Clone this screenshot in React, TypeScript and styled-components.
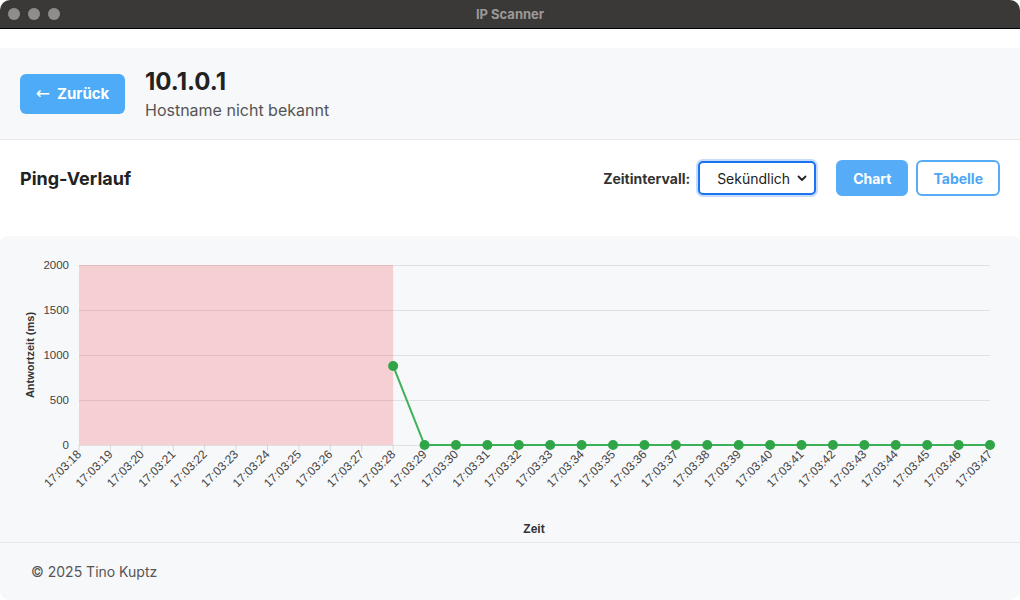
import React from "react";
import styled, { createGlobalStyle } from "styled-components";

const GlobalStyle = createGlobalStyle`
  html, body {
    margin: 0;
    padding: 0;
    background: #ffffff;
  }
  body {
    font-family: Inter, "Noto Sans", "Liberation Sans", sans-serif;
    color: #222;
  }
`;

const times = Array.from({ length: 30 }, (_, i) => `17:03:${String(18 + i).padStart(2, "0")}`);
const values: (number | null)[] = times.map((_, i) => (i < 10 ? null : i === 10 ? 878 : 0));

const PLOT = { left: 79, right: 990, top: 29, bottom: 209 };
const MAX = 2000;

const xAt = (i: number) => PLOT.left + ((PLOT.right - PLOT.left) * i) / (times.length - 1);
const yAt = (v: number) => PLOT.bottom - ((PLOT.bottom - PLOT.top) * v) / MAX;

const PingChart = () => {
  const pts = values
    .map((v, i) => (v === null ? null : [xAt(i), yAt(v)]))
    .filter((p): p is number[] => p !== null);
  return (
    <Styled.ChartSvg width={1020} height={306} viewBox="0 0 1020 306">
      <rect
        x={PLOT.left}
        y={PLOT.top}
        width={xAt(10) - PLOT.left}
        height={PLOT.bottom - PLOT.top}
        fill="#f6cfd3"
      />
      {[0, 500, 1000, 1500, 2000].map((v) => (
        <g key={v}>
          <line
            x1={PLOT.left}
            x2={PLOT.right}
            y1={yAt(v) + 0.5}
            y2={yAt(v) + 0.5}
            stroke="rgba(0,0,0,0.09)"
            strokeWidth={1}
          />
          <text
            x={69}
            y={yAt(v) + 4}
            textAnchor="end"
            fontSize={11.5}
            fill="#444"
            fontFamily="'Liberation Sans', Arial, sans-serif"
          >
            {v}
          </text>
        </g>
      ))}
      {times.map((t, i) => (
        <g key={t}>
          <line
            x1={xAt(i)}
            x2={xAt(i)}
            y1={PLOT.bottom}
            y2={PLOT.bottom + 6}
            stroke="rgba(0,0,0,0.12)"
          />
          <text
            transform={`translate(${xAt(i) + 3} ${PLOT.bottom + 10}) rotate(-45)`}
            textAnchor="end"
            fontSize={12}
            fill="#444"
            fontFamily="'Liberation Sans', Arial, sans-serif"
          >
            {t}
          </text>
        </g>
      ))}
      <polyline
        points={pts.map((p) => p.join(",")).join(" ")}
        fill="none"
        stroke="#3cb15a"
        strokeWidth={2}
      />
      {pts.map(([x, y], i) => (
        <circle key={i} cx={x} cy={y} r={5} fill="#30a548" />
      ))}
      <text
        transform="translate(34 119) rotate(-90)"
        textAnchor="middle"
        fontSize={11}
        fontWeight="bold"
        fill="#333"
        fontFamily="'Liberation Sans', Arial, sans-serif"
      >
        Antwortzeit (ms)
      </text>
      <text
        x={534}
        y={297}
        textAnchor="middle"
        fontSize={12}
        fontWeight="bold"
        fill="#333"
        fontFamily="'Liberation Sans', Arial, sans-serif"
      >
        Zeit
      </text>
    </Styled.ChartSvg>
  );
};

export default function App() {
  return (
    <>
      <GlobalStyle />
      <Styled.Window>
        <Styled.TitleBar>
          <Styled.Lights>
            <Styled.Light />
            <Styled.Light />
            <Styled.Light />
          </Styled.Lights>
          <Styled.WindowTitle>IP Scanner</Styled.WindowTitle>
        </Styled.TitleBar>
        <Styled.Content>
          <Styled.Header>
            <Styled.BackButton>
              <Styled.Arrow>←</Styled.Arrow>Zurück
            </Styled.BackButton>
            <Styled.HostInfo>
              <Styled.HostIp>10.1.0.1</Styled.HostIp>
              <Styled.HostName>Hostname nicht bekannt</Styled.HostName>
            </Styled.HostInfo>
          </Styled.Header>
          <Styled.Section>
            <Styled.SectionTitle>Ping-Verlauf</Styled.SectionTitle>
            <Styled.Controls>
              <Styled.Label htmlFor="interval">Zeitintervall:</Styled.Label>
              <Styled.SelectWrap>
                <Styled.Select id="interval" defaultValue="s">
                  <option value="s">Sekündlich</option>
                  <option value="m">Minütlich</option>
                  <option value="h">Stündlich</option>
                </Styled.Select>
                <Styled.Chevron width="12" height="12" viewBox="0 0 12 12">
                  <path d="M2.5 4.5 L6 8 L9.5 4.5" fill="none" stroke="#222" strokeWidth="1.8" strokeLinecap="round" strokeLinejoin="round" />
                </Styled.Chevron>
              </Styled.SelectWrap>
              <Styled.ViewButtons>
                <Styled.ViewButton $active>Chart</Styled.ViewButton>
                <Styled.ViewButton>Tabelle</Styled.ViewButton>
              </Styled.ViewButtons>
            </Styled.Controls>
          </Styled.Section>
          <Styled.ChartCard>
            <PingChart />
          </Styled.ChartCard>
          <Styled.Footer>© 2025 Tino Kuptz</Styled.Footer>
        </Styled.Content>
      </Styled.Window>
    </>
  );
}

const Styled = {
  Window: styled.div`
    width: 1020px;
    height: 600px;
    display: flex;
    flex-direction: column;
    border-radius: 10px;
    overflow: hidden;
    background: #f7f8fa;
  `,
  TitleBar: styled.div`
    height: 28px;
    flex: none;
    background: #3b3937;
    border-bottom: 1px solid #000;
    display: flex;
    align-items: center;
    justify-content: center;
    position: relative;
  `,
  Lights: styled.div`
    position: absolute;
    left: 8px;
    top: 8px;
    display: flex;
    gap: 8px;
  `,
  Light: styled.span`
    width: 12px;
    height: 12px;
    border-radius: 50%;
    background: #8f8d8b;
  `,
  WindowTitle: styled.div`
    font-family: Inter, "Liberation Sans", sans-serif;
    font-size: 13px;
    font-weight: 700;
    color: #9c9a98;
  `,
  Content: styled.div`
    flex: 1;
    display: flex;
    flex-direction: column;
    background: #ffffff;
    padding-top: 19px;
  `,
  Header: styled.header`
    height: 92px;
    flex: none;
    box-sizing: border-box;
    background: #f7f8fa;
    border-bottom: 1px solid #e6e8eb;
    display: flex;
    align-items: center;
    gap: 20px;
    padding: 0 20px;
  `,
  BackButton: styled.button`
    width: 105px;
    height: 40px;
    border: none;
    border-radius: 6px;
    background: #4dabf7;
    color: #fff;
    font-family: Inter, "Liberation Sans", sans-serif;
    font-size: 15px;
    font-weight: 700;
    cursor: pointer;
    display: flex;
    align-items: center;
    justify-content: center;
    gap: 7px;
    padding: 0;
  `,
  Arrow: styled.span`
    font-family: "DejaVu Sans", sans-serif;
    font-weight: 400;
    font-size: 17px;
    line-height: 1;
    margin-top: -1px;
  `,
  HostInfo: styled.div`
    display: flex;
    flex-direction: column;
    gap: 4px;
  `,
  HostIp: styled.h1`
    margin: 0;
    font-size: 24px;
    line-height: 28px;
    font-weight: 700;
    color: #222;
  `,
  HostName: styled.div`
    font-size: 16px;
    line-height: 20px;
    color: #555;
  `,
  Section: styled.section`
    height: 76px;
    flex: none;
    margin: 0 0 20px;
    box-sizing: border-box;
    display: flex;
    align-items: center;
    justify-content: space-between;
    padding: 0 20px;
  `,
  SectionTitle: styled.h2`
    margin: 0;
    font-size: 18px;
    font-weight: 700;
    color: #222;
  `,
  Controls: styled.div`
    display: flex;
    align-items: center;
  `,
  Label: styled.label`
    font-size: 14px;
    font-weight: 700;
    color: #333;
    margin-right: 8px;
  `,
  SelectWrap: styled.div`
    position: relative;
    margin-right: 20px;
  `,
  Select: styled.select`
    appearance: none;
    display: block;
    width: 118px;
    height: 34px;
    box-sizing: border-box;
    border: 2px solid #1a73f0;
    border-radius: 5px;
    box-shadow: 0 0 0 2px #c7dcfb;
    background: #fff;
    padding: 0 0 0 17px;
    font-family: Inter, "Liberation Sans", sans-serif;
    font-size: 14px;
    color: #222;
    outline: none;
  `,
  Chevron: styled.svg`
    position: absolute;
    right: 8px;
    top: 11px;
    pointer-events: none;
  `,
  ViewButtons: styled.div`
    display: flex;
    gap: 8px;
  `,
  ViewButton: styled.button<{ $active?: boolean }>`
    height: 36px;
    padding: 0 15px;
    box-sizing: border-box;
    border-radius: 6px;
    border: 2px solid #56acf7;
    background: ${(p) => (p.$active ? "#56acf7" : "#fff")};
    color: ${(p) => (p.$active ? "#fff" : "#4ea6f5")};
    font-family: Inter, "Liberation Sans", sans-serif;
    font-size: 14px;
    font-weight: 700;
    cursor: pointer;
  `,
  ChartCard: styled.div`
    height: 306px;
    flex: none;
    background: #f7f8fa;
    border-radius: 8px 8px 0 0;
  `,
  ChartSvg: styled.svg`
    display: block;
  `,
  Footer: styled.footer`
    flex: 1;
    background: #f7f8fa;
    border-top: 1px solid #e6e8eb;
    display: flex;
    align-items: center;
    padding-left: 31px;
    font-size: 14px;
    color: #555;
  `,
};
